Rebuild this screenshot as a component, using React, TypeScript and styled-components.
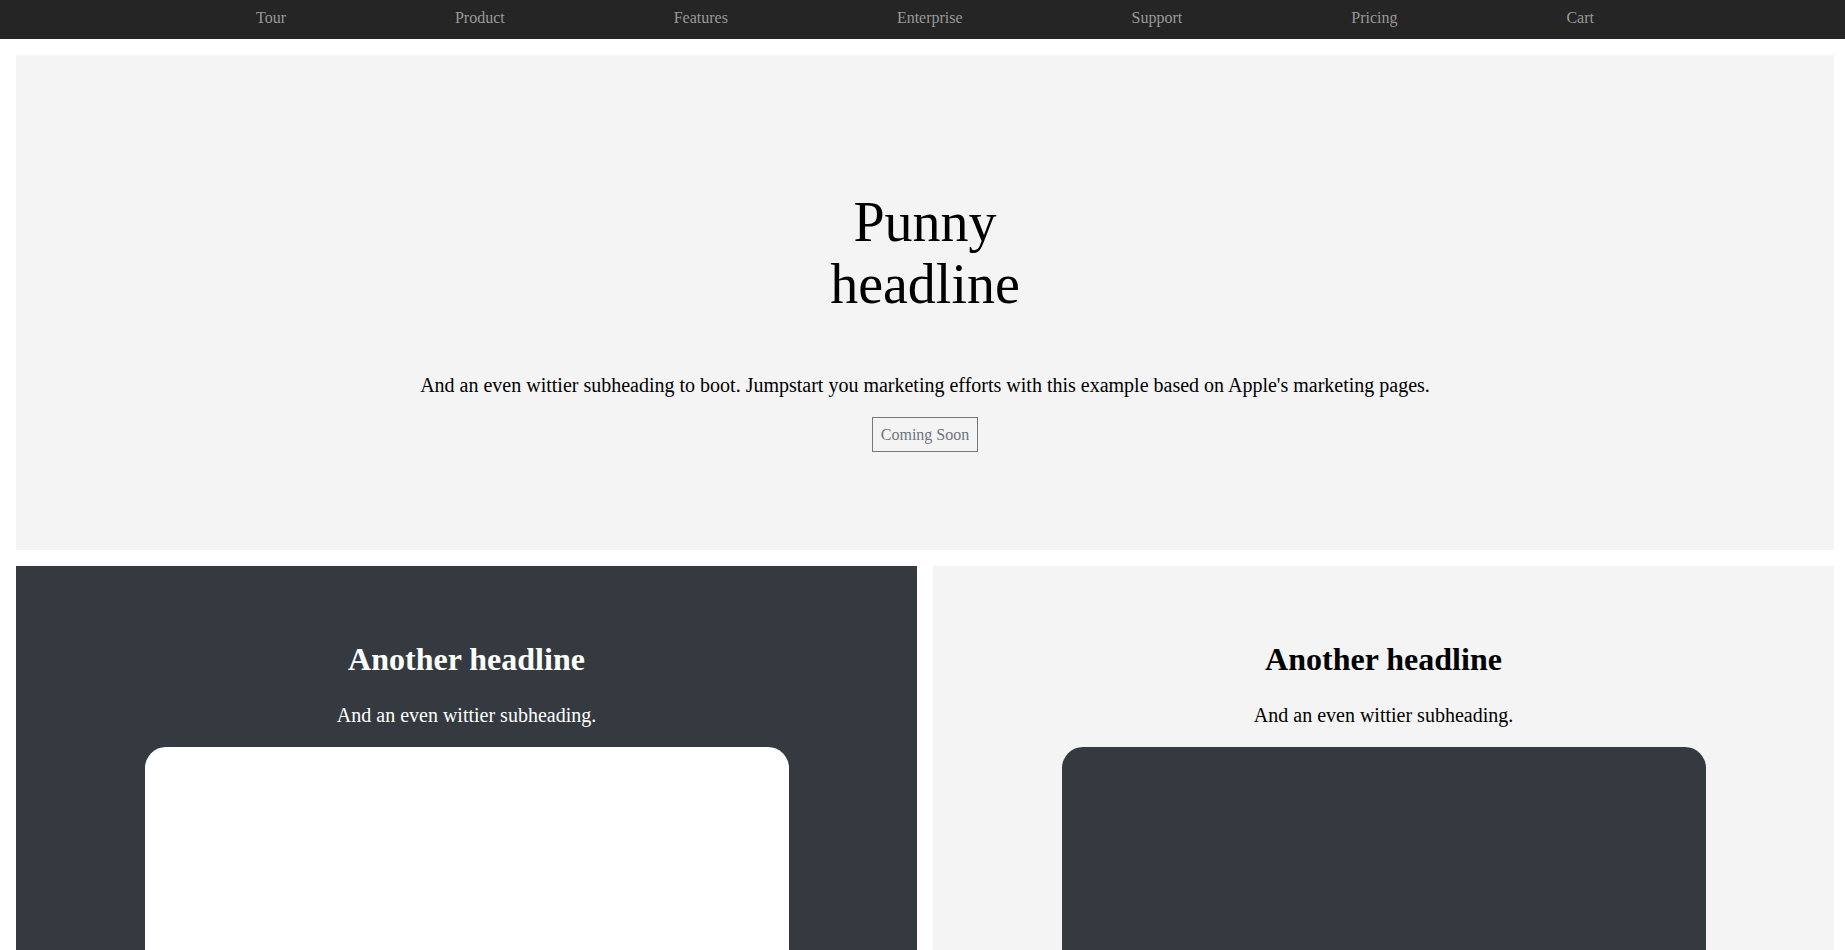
import React from "react";
import styled, { createGlobalStyle } from "styled-components";

const NAV_LIST = ["Tour", "Product", "Features", "Enterprise", "Support", "Pricing", "Cart"];

const FEATURES = [
  { id: "dark", dark: true },
  { id: "light", dark: false },
];

const GlobalStyle = createGlobalStyle`
  html, body {
    margin: 0;
    padding: 0;
    overflow: hidden;
    background: #fff;
  }
  body {
    font-family: "Liberation Serif", "Times New Roman", serif;
    color: #000;
  }
  * {
    box-sizing: border-box;
  }
`;

const App = () => {
  return (
    <>
      <GlobalStyle />
      <Page>
        <SiteHeader>
          <NavInner>
            {NAV_LIST.map((item) => (
              <NavLink key={item} href="#">
                {item}
              </NavLink>
            ))}
          </NavInner>
        </SiteHeader>

        <Hero>
          <HeroTitle>Punny headline</HeroTitle>
          <Lead>
            And an even wittier subheading to boot. Jumpstart you marketing efforts with this example
            based on Apple's marketing pages.
          </Lead>
          <OutlineButton href="#">Coming Soon</OutlineButton>
        </Hero>

        <FeatureRow>
          {FEATURES.map((item) => (
            <FeatureCard key={item.id} $dark={item.dark}>
              <FeatureTitle>Another headline</FeatureTitle>
              <FeatureLead>And an even wittier subheading.</FeatureLead>
              <DeviceBox $dark={item.dark} />
            </FeatureCard>
          ))}
        </FeatureRow>
      </Page>
    </>
  );
};
export default App;

const Page = styled.div`
  width: 1850px;
  min-height: 100vh;
`;

const SiteHeader = styled.nav`
  height: 39px;
  background: #252525;
`;

const NavInner = styled.div`
  width: 1338px;
  margin: 0 auto;
  display: flex;
  justify-content: space-between;
`;

const NavLink = styled.a`
  display: block;
  padding-top: 9px;
  font-size: 16px;
  line-height: 18px;
  color: #999;
  text-decoration: none;
`;

const Hero = styled.section`
  margin: 16px 16px 0;
  padding: 137px 0 98px;
  background: #f4f4f4;
  display: flex;
  flex-direction: column;
  align-items: center;
  text-align: center;
`;

const HeroTitle = styled.h1`
  margin: 0;
  max-width: 300px;
  font-size: 56px;
  font-weight: 400;
  line-height: 61.6px;
`;

const Lead = styled.p`
  margin: 59px 0 0;
  font-size: 20px;
  line-height: 23px;
`;

const OutlineButton = styled.a`
  display: inline-block;
  margin-top: 20px;
  padding: 7px 8px;
  border: 1px solid #76797c;
  font-size: 16px;
  line-height: 19px;
  color: #6c757d;
  text-decoration: none;
`;

const FeatureRow = styled.div`
  display: grid;
  grid-template-columns: 1fr 1fr;
  gap: 16px;
  margin: 16px 16px 0;
`;

const FeatureCard = styled.div<{ $dark: boolean }>`
  padding: 75px 48px 0;
  overflow: hidden;
  text-align: center;
  background: ${({ $dark }) => ($dark ? "#343a40" : "#f4f4f4")};
  color: ${({ $dark }) => ($dark ? "#fff" : "#000")};
`;

const FeatureTitle = styled.h2`
  margin: 0;
  font-size: 32px;
  font-weight: 700;
  line-height: 37px;
`;

const FeatureLead = styled.p`
  margin: 26px 0 20px;
  font-size: 20px;
  line-height: 23px;
`;

const DeviceBox = styled.div<{ $dark: boolean }>`
  width: 80%;
  height: 300px;
  margin: 0 auto;
  border-radius: 21px 21px 0 0;
  background: ${({ $dark }) => ($dark ? "#fff" : "#343a40")};
`;
